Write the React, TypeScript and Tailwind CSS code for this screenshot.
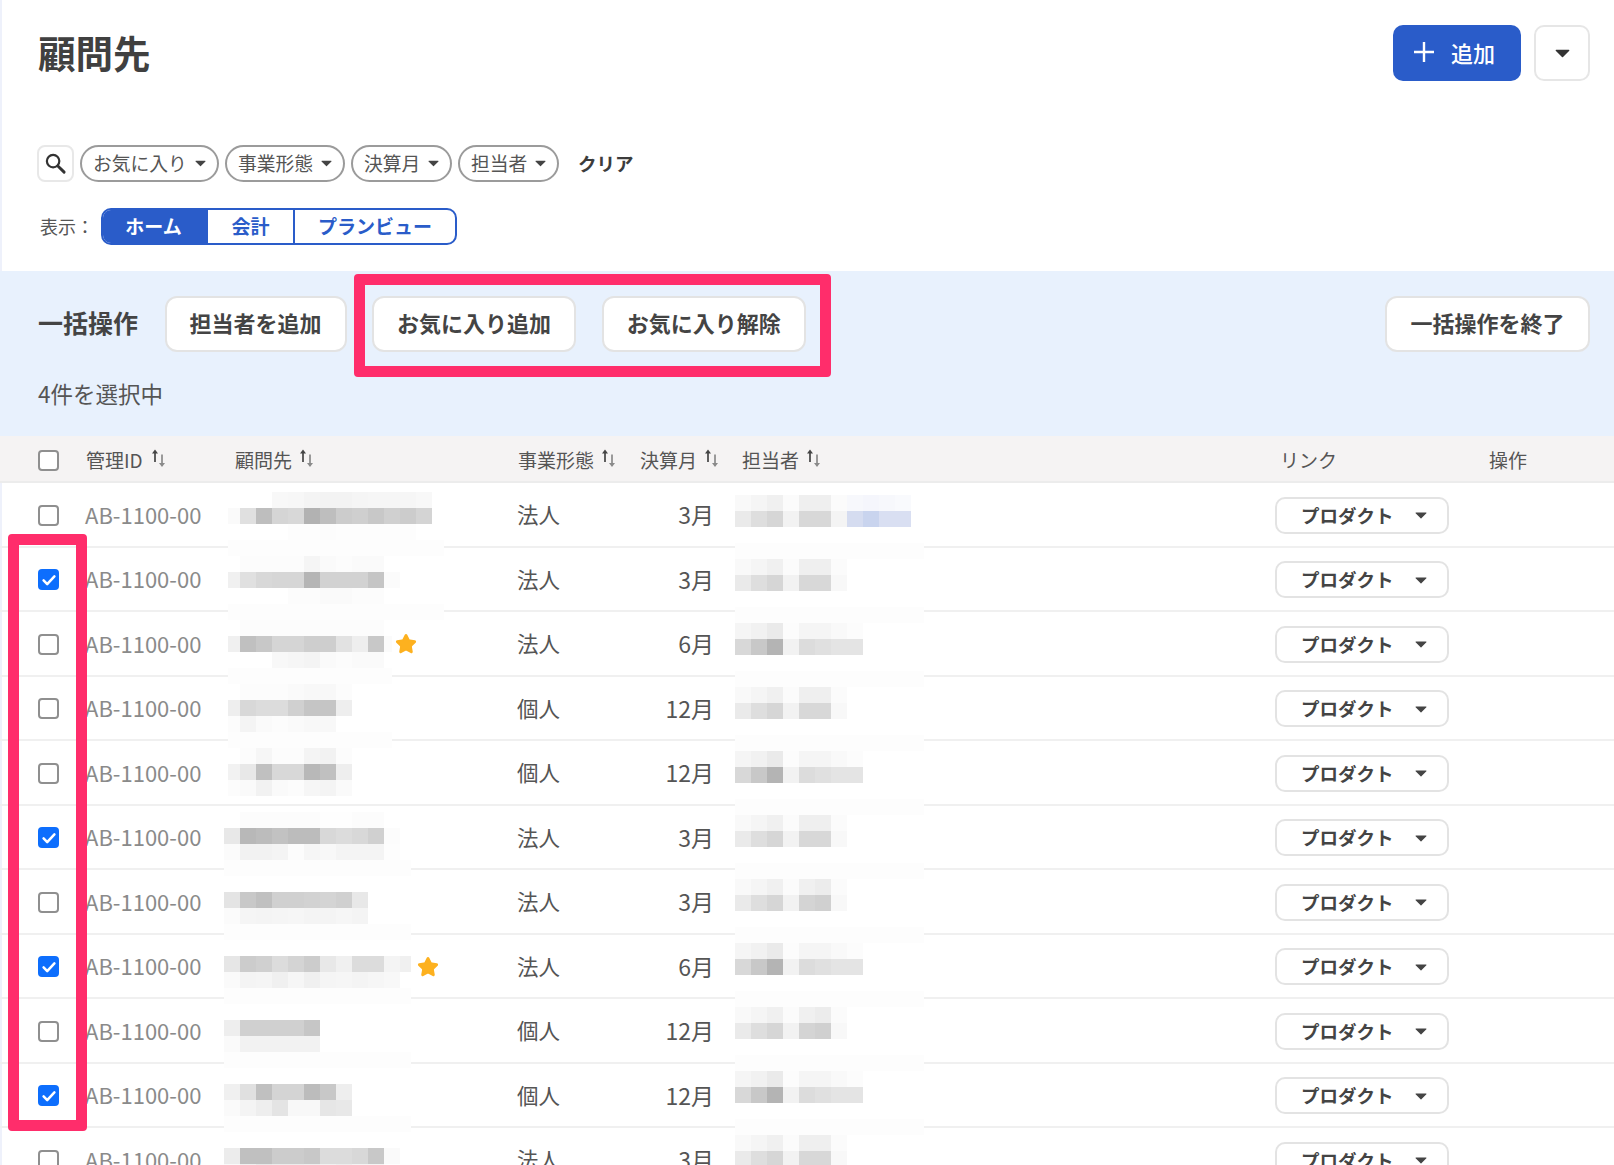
import { Star } from "lucide-react";

type Mosaic = { start: number; above: string; band: string; below: string; patch: number };
type Row = {
  type: string;
  month: string;
  checked: boolean;
  star?: number;
  name: Mosaic;
  person: string[];
};

const P_A = ["f9 f5 f0 fb ef ef fb", "ea de d6 f2 d8 d8 f8"];
const P_B = ["f5 f1 ea fc f5 f5 f9 fc", "d8 c8 b4 f2 dc e0 e4 e4"];
const P_C = ["f9 f5 f0 fb f0 ec fb", "ea de d6 f2 d4 d0 f8"];
const P_D = [
  "f9 f5 f0 fb ef ef fb f7f8fc f5f6fc f7f8fc f9fafd",
  "ea de d6 f2 d8 d8 f4 d5dcf0 c9d4ee d9dff2 d9dff2",
];

const rows: Row[] = [
  {
    type: "法人", month: "3月", checked: false, person: P_D,
    name: { start: 228, above: "ff ff ff f8 f7 f4 f3 f3 f5 f6 f6 f6 f8", band: "fa e0 be d5 d8 b2 be cc cf c8 d0 cc d4", below: "ff ff ff ff fd fd fc fd fd fd fd fd", patch: 216 },
  },
  {
    type: "法人", month: "3月", checked: true, person: P_A,
    name: { start: 228, above: "ff fc fc fc fc f5 fa fc fa fa", band: "f0 e0 d8 d6 d6 b5 d2 d2 d2 c5 fb", below: "ff ff ff ff fc fc fa fa fc fc", patch: 216 },
  },
  {
    type: "法人", month: "6月", checked: false, star: 406, person: P_B,
    name: { start: 228, above: "ff fc fc fc fc fc fc fc fc fc", band: "f0 c0 c8 d5 d5 ce ce e2 ee c8 fb", below: "ff ff ff f8 f6 f4 fa fc fa fa", patch: 164 },
  },
  {
    type: "個人", month: "12月", checked: false, person: P_A,
    name: { start: 228, above: "ff fc fc fc fa f8 f8 fc", band: "ee d8 dc dc d0 c5 c5 ee", below: "fc f4 fa fc fa f8 f8", patch: 164 },
  },
  {
    type: "個人", month: "12月", checked: false, person: P_B,
    name: { start: 228, above: "ff fc f6 fc fc f4 f2 fc", band: "f2 e8 c0 d8 d8 b8 c0 ee", below: "fc fa f2 fa fc f6 f4 fa", patch: 0 },
  },
  {
    type: "法人", month: "3月", checked: true, person: P_A,
    name: { start: 224, above: "ff fc fc fc fc fc fe fe fc fc", band: "e8 b8 bc c2 bc bc d8 dc d8 d0 fc", below: "fb f2 f2 f4 fc f6 f8 f4 f4 f4 fd", patch: 187 },
  },
  {
    type: "法人", month: "3月", checked: false, person: P_C,
    name: { start: 224, above: "ff ff ff ff ff ff ff ff ff", band: "e4 c8 c0 d0 d0 d2 d4 d0 e8", below: "fb f5 f4 f5 f6 f4 f4 f6 f4", patch: 187 },
  },
  {
    type: "法人", month: "6月", checked: true, star: 428, person: P_B,
    name: { start: 224, above: "ff ff ff ff ff ff ff ff ff", band: "e6 cc d0 dc d4 cc e8 f0 dc dc f4 f0", below: "fa f4 f5 f0 f6 f0 f5 f6 f4 f6 f8", patch: 187 },
  },
  {
    type: "個人", month: "12月", checked: false, person: P_C,
    name: { start: 224, above: "ff ff ff ff ff ff", band: "ee d0 d0 d0 d0 c6", below: "fa f2 f2 f2 f2 f2", patch: 187 },
  },
  {
    type: "個人", month: "12月", checked: true, person: P_B,
    name: { start: 224, above: "ff ff ff ff ff ff ff ff", band: "f0 e0 c0 d4 d4 bc c8 ee", below: "fa f4 ee e4 f8 f8 e6 e8", patch: 187 },
  },
  {
    type: "法人", month: "3月", checked: false, person: P_A,
    name: { start: 224, above: "ff ff ff ff ff ff ff", band: "ec c0 c0 cc cc c8 dc dc d8 c8 fa", below: "fa f0 e8 ec ec ee f2 ee f4 f4", patch: 0 },
  },
];

function toColor(v: string) {
  return `#${v.length === 2 ? v + v + v : v}`;
}

function Cells({ line, first }: { line: string; first?: number }) {
  return (
    <div className="flex h-4">
      {line.split(" ").map((v, i) => (
        <div
          key={i}
          className="h-4 shrink-0"
          style={{ width: i === 0 && first ? first : 16, backgroundColor: toColor(v) }}
        />
      ))}
    </div>
  );
}

function Caret({ className }: { className?: string }) {
  return (
    <svg viewBox="0 0 12 7" className={className}>
      <path d="M1 .5h10a.5.5 0 0 1 .4.8l-5 5a.5.5 0 0 1-.8 0l-5-5A.5.5 0 0 1 1 .5z" fill="currentColor" />
    </svg>
  );
}

function SortIcon() {
  return (
    <svg viewBox="0 0 16 20" className="ml-[6px] mt-[-4px] h-5 w-4 shrink-0">
      <path d="M5 14V3" stroke="#444" strokeWidth="1.7" />
      <path d="M2 5.5 5 1.5l3 4z" fill="#444" />
      <path d="M12 6.5v11" stroke="#8a8a8a" strokeWidth="1.7" />
      <path d="M9 15l3 4 3-4z" fill="#8a8a8a" />
    </svg>
  );
}

function Checkbox({ checked }: { checked?: boolean }) {
  if (checked) {
    return (
      <span className="flex h-[21px] w-[21px] items-center justify-center rounded-[4px] bg-[#0d6efd]">
        <svg viewBox="0 0 20 20" className="h-[18px] w-[18px]">
          <path d="M4 10.5l4 4 8-8.5" fill="none" stroke="#fff" strokeWidth="2.8" strokeLinecap="round" strokeLinejoin="round" />
        </svg>
      </span>
    );
  }
  return <span className="block h-[21px] w-[21px] rounded-[4px] border-2 border-[#8f8f8f] bg-white" />;
}

function FilterChip({ label, width }: { label: string; width: string }) {
  return (
    <button className={`flex h-[37px] items-center justify-between rounded-full border-2 border-[#9b9b9b] pl-[11px] pr-[11px] text-[18.8px] whitespace-nowrap text-[#555] ${width}`}>
      <span>{label}</span>
      <Caret className="h-[7px] w-[11px] text-[#444]" />
    </button>
  );
}

function BulkButton({ label, width }: { label: string; width: string }) {
  return (
    <button className={`h-[56px] shrink-0 rounded-[12px] border-2 border-[#e3e3e3] bg-white pb-[3px] text-[22px] font-bold text-[#444] ${width}`}>
      {label}
    </button>
  );
}

function HeadCell({ label, className }: { label: string; className?: string }) {
  return (
    <div className={`flex items-center whitespace-nowrap ${className ?? ""}`}>
      <span>{label}</span>
      <SortIcon />
    </div>
  );
}

const gridCols = "grid grid-cols-[85px_143px_289px_123px_74px_561px_214px_125px]";

export default function App() {
  return (
    <div
      className="relative h-[1165px] w-[1614px] overflow-hidden bg-white shadow-[inset_2px_0_0_#eef1fb]"
      style={{ fontFamily: '"Noto Sans CJK JP", "Noto Sans", sans-serif' }}
    >
      {/* Title */}
      <div className="flex h-[145px] items-start justify-between pl-[38px] pr-[24px] pt-[25px]">
        <h1 className="text-[37.5px] leading-[54px] font-bold text-[#404040]">顧問先</h1>
        <div className="flex gap-[13px]">
          <button className="flex h-[56px] w-[128px] items-center justify-center gap-[17px] rounded-[10px] bg-[#2a5cc9] pb-[2px] pr-[5px] text-[22px] font-medium text-white">
            <svg viewBox="0 0 20 20" className="h-5 w-5">
              <path d="M10 0v20M0 10h20" stroke="#fff" strokeWidth="2.4" />
            </svg>
            <span>追加</span>
          </button>
          <button className="flex h-[56px] w-[56px] items-center justify-center rounded-[10px] border-2 border-[#e6e6e6] bg-white">
            <Caret className="h-[9px] w-[15px] text-[#333]" />
          </button>
        </div>
      </div>

      {/* Filters */}
      <div className="flex h-[37px] items-center pl-[37px]">
        <button className="mr-[6px] flex h-[37px] w-[37px] items-center justify-center rounded-[8px] border-2 border-[#e8e8e8]">
          <svg viewBox="0 0 24 24" className="h-[23px] w-[23px]" fill="none" stroke="#333">
            <circle cx="9.5" cy="9.5" r="6.5" strokeWidth="2.3" />
            <path d="M14.5 14.5l6.5 6.5" strokeWidth="3" strokeLinecap="round" />
          </svg>
        </button>
        <div className="flex gap-[6px]">
          <FilterChip label="お気に入り" width="w-[139px]" />
          <FilterChip label="事業形態" width="w-[120px]" />
          <FilterChip label="決算月" width="w-[101px]" />
          <FilterChip label="担当者" width="w-[101px]" />
        </div>
        <button className="ml-[19px] text-[18.5px] font-bold text-[#3c3c3c]">クリア</button>
      </div>

      {/* View switch */}
      <div className="mt-[26px] flex h-[37px] items-center pl-[40px]">
        <span className="w-[61px] text-[18px] text-[#555]">表示：</span>
        <div className="flex h-[37px] w-[356px] overflow-hidden rounded-[10px] border-2 border-[#2a5cc9] text-[19px] font-bold text-[#2a5cc9]">
          <div className="flex w-[105px] items-center justify-center bg-[#2a5cc9] pr-[4px] text-white">ホーム</div>
          <div className="flex w-[87px] items-center justify-center border-r-2 border-[#2a5cc9]">会計</div>
          <div className="flex flex-1 items-center justify-center">プランビュー</div>
        </div>
      </div>

      {/* Bulk actions */}
      <div className="relative mt-[26px] h-[165px] bg-[#e8f1fd] pl-[38px] pr-[24px] pt-[25px]">
        <div className="flex items-center">
          <span className="mr-[27.5px] w-[99px] pb-[2px] text-[25px] font-bold whitespace-nowrap text-[#444]">一括操作</span>
          <div className="flex gap-[25.5px]">
            <BulkButton label="担当者を追加" width="w-[182px]" />
            <BulkButton label="お気に入り追加" width="w-[204px]" />
            <BulkButton label="お気に入り解除" width="w-[204.5px]" />
          </div>
          <div className="ml-auto">
            <BulkButton label="一括操作を終了" width="w-[205px]" />
          </div>
        </div>
        <div className="mt-[25px] text-[22.5px] leading-[32px] text-[#555]">4件を選択中</div>
        <div className="absolute left-[354px] top-[3px] h-[103px] w-[477px] rounded-[4px] border-[11px] border-[#ff2d6b]" />
      </div>

      {/* Table head */}
      <div className={`${gridCols} h-[47px] items-center border-b-2 border-[#ececec] bg-[#f5f3f3] pt-[3px] text-[19px] text-[#555]`}>
        <div className="pl-[38px]">
          <Checkbox />
        </div>
        <HeadCell label="管理ID" className="gap-[1px] pl-px" />
        <HeadCell label="顧問先" className="pl-[7px]" />
        <HeadCell label="事業形態" className="pl-px" />
        <HeadCell label="決算月" />
        <HeadCell label="担当者" className="pl-[28px]" />
        <div className="pl-[5px]">リンク</div>
        <div>操作</div>
      </div>

      {/* Rows */}
      {rows.map((r, i) => (
        <div key={i} className={`${gridCols} h-[64.5px] items-center border-b-2 border-[#f0f0f0] pt-[2px]`}>
          <div className="pl-[38px]">
            <Checkbox checked={r.checked} />
          </div>
          <div className="pb-[2px] text-[22px] text-[#8a8a8a]">AB-1100-00</div>
          <div className="relative self-stretch">
            <div className="absolute left-0" style={{ top: 7 - i * 0.5, marginLeft: r.name.start - 228 }}>
              <div className="overflow-hidden" style={{ width: r.name.patch || undefined }}>
                <Cells line={r.name.above} first={240 - r.name.start} />
                <Cells line={r.name.band} first={240 - r.name.start} />
                <Cells line={r.name.below} first={240 - r.name.start} />
              </div>
              <div className="h-4 bg-[#fdfdfd]" style={{ width: r.name.patch }} />
            </div>
            {r.star && (
              <Star
                size={22}
                fill="#fdb11f"
                strokeWidth={2}
                className="absolute top-[19px] text-[#fdb11f]"
                style={{ left: r.star - 228 - 11 }}
              />
            )}
          </div>
          <div className="pb-[2px] text-[21.5px] text-[#555]">{r.type}</div>
          <div className="pb-[2px] text-right text-[23px] text-[#555]">{r.month}</div>
          <div className="relative self-stretch">
            <div className="absolute left-[21px]" style={{ top: 10 - i * 0.5 }}>
              <Cells line={r.person[0]} />
              <Cells line={r.person[1]} />
              <div className="h-4" />
              <div className="h-4 w-[189px] bg-[#fdfdfd]" />
            </div>
          </div>
          <div>
            <button className="flex h-[37px] w-[174px] items-center rounded-[10px] border-2 border-[#e3e3e3] bg-white pl-[24px] pt-[1px] text-[18.5px] font-bold text-[#444]">
              <span>プロダクト</span>
              <Caret className="ml-[21px] h-[7px] w-[12px] text-[#444]" />
            </button>
          </div>
          <div />
        </div>
      ))}

      {/* Annotation over the checkbox column */}
      <div className="absolute left-[8px] top-[534px] h-[597px] w-[79px] rounded-[4px] border-[11px] border-[#ff2d6b]" />
    </div>
  );
}
